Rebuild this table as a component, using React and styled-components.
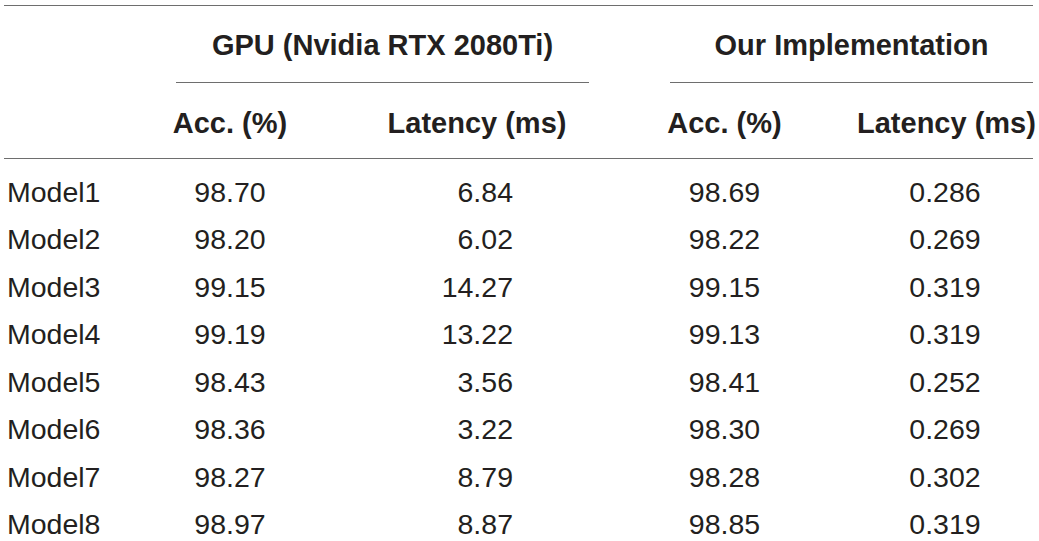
import styled, { createGlobalStyle } from "styled-components"


const GlobalStyle = createGlobalStyle`
    body {
        margin: 0;
        background: #ffffff;
        font-family: "Liberation Sans", Arial, Helvetica, sans-serif;
        color: #231f20;
    }
`

const Table = styled.div`
    width: 1029px;
    margin: 5px 0 0 4px;
    border-top: 1px solid #6e6e6e;
    font-size: 28.5px;
`

const Row = styled.div`
    display: grid;
    grid-template-columns: 94px 264px 230px 265px 176px;
`

const GroupHead = styled.div`
    grid-column: ${(p) => p.$col} / span 2;
    margin: 0 ${(p) => p.$gapRight}px 0 ${(p) => p.$gapLeft}px;
    padding: 23px 0 21px;
    line-height: 32px;
    font-size: 29px;
    font-weight: 700;
    text-align: center;
    border-bottom: 1px solid #6e6e6e;
`

const SubHeadRow = styled(Row)`
    border-bottom: 1px solid #6e6e6e;
`

const SubHead = styled.div`
    padding: 24px 0 19px;
    line-height: 32px;
    font-size: 29px;
    font-weight: 700;
    text-align: center;
    white-space: nowrap;
`

const Body = styled.div`
    padding-top: 10px;
`

const Cell = styled.div`
    line-height: 47.43px;
    white-space: nowrap;
    text-align: ${(p) => p.$align || "center"};
    padding-left: ${(p) => (p.$align === "left" ? "3px" : "0")};
    padding-right: ${(p) => (p.$align === "right" ? "79px" : "0")};
`

const rows = [
    ["Model1", "98.70", "6.84", "98.69", "0.286"],
    ["Model2", "98.20", "6.02", "98.22", "0.269"],
    ["Model3", "99.15", "14.27", "99.15", "0.319"],
    ["Model4", "99.19", "13.22", "99.13", "0.319"],
    ["Model5", "98.43", "3.56", "98.41", "0.252"],
    ["Model6", "98.36", "3.22", "98.30", "0.269"],
    ["Model7", "98.27", "8.79", "98.28", "0.302"],
    ["Model8", "98.97", "8.87", "98.85", "0.319"],
]


const App = () => (
    <>
        <GlobalStyle />
        <Table>
            <Row>
                <div />
                <GroupHead $col={2} $gapLeft={78} $gapRight={3}>
                    GPU (Nvidia RTX 2080Ti)
                </GroupHead>
                <GroupHead $col={4} $gapLeft={78} $gapRight={0}>
                    Our Implementation
                </GroupHead>
            </Row>
            <SubHeadRow>
                <div />
                <SubHead>Acc. (%)</SubHead>
                <SubHead>Latency (ms)</SubHead>
                <SubHead>Acc. (%)</SubHead>
                <SubHead>Latency (ms)</SubHead>
            </SubHeadRow>
            <Body>
                {rows.map(([name, acc, lat, ourAcc, ourLat]) => (
                    <Row key={name}>
                        <Cell $align="left">{name}</Cell>
                        <Cell>{acc}</Cell>
                        <Cell $align="right">{lat}</Cell>
                        <Cell>{ourAcc}</Cell>
                        <Cell>{ourLat}</Cell>
                    </Row>
                ))}
            </Body>
        </Table>
    </>
)

export default App
